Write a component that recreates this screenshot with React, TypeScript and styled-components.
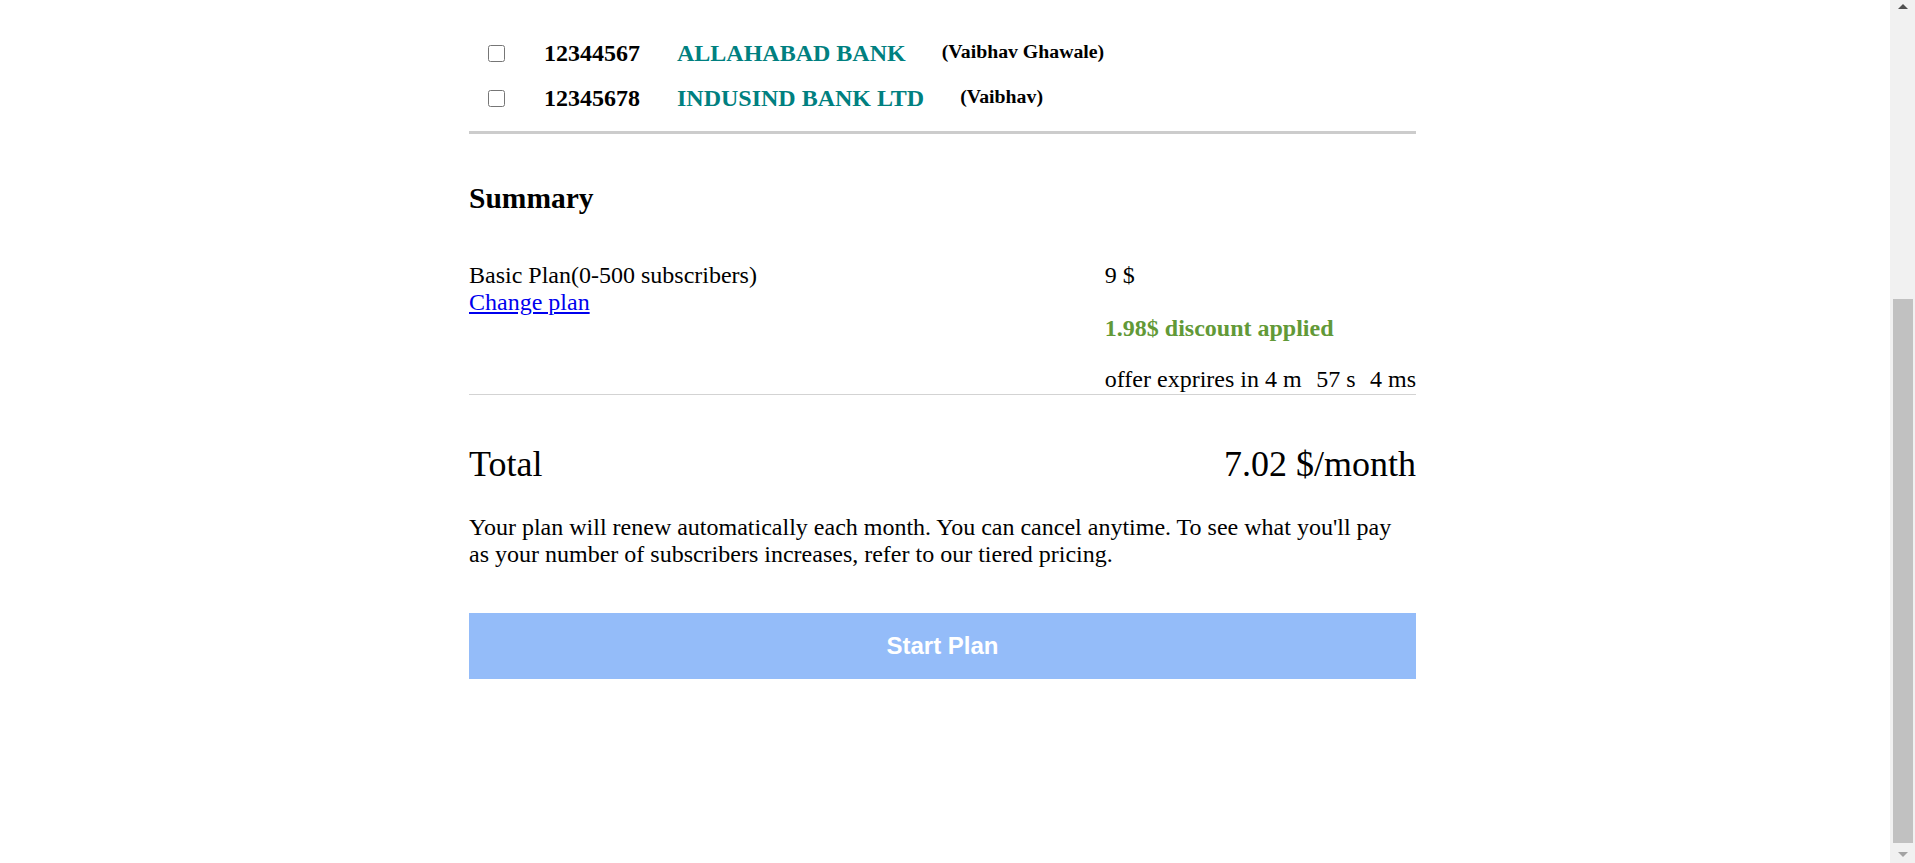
import React from "react";
import styled, { createGlobalStyle } from "styled-components";

const GlobalStyle = createGlobalStyle`
  html, body {
    margin: 0;
    padding: 0;
    overflow: hidden;
    background: #ffffff;
  }
  body {
    font-family: "Liberation Serif", "Times New Roman", serif;
    color: #000000;
  }
`;

const Page = styled.div`
  display: flex;
  width: 1915px;
  height: 863px;
`;

const Main = styled.main`
  flex: 1;
  min-width: 0;
`;

const Content = styled.div`
  width: 947px;
  margin-left: 469px;
`;

const AccountList = styled.div`
  padding-top: 31px;
  padding-bottom: 10px;
  border-bottom: 3px solid #cccccc;
`;

const AccountRow = styled.label`
  display: flex;
  align-items: center;
  height: 45px;
`;

const Check = styled.input.attrs({ type: "checkbox" })`
  flex: none;
  width: 17px;
  height: 17px;
  margin: 0 0 0 19px;
`;

const AccountNo = styled.span`
  margin-left: 39px;
  font-size: 24px;
  font-weight: bold;
`;

const BankName = styled.span`
  margin-left: 37px;
  font-size: 24px;
  font-weight: bold;
  color: #008080;
`;

const Holder = styled.span`
  margin-left: 36px;
  margin-bottom: 5px;
  font-size: 19.8px;
  font-weight: bold;
`;

const SummaryTitle = styled.h3`
  margin: 48px 0 0;
  font-size: 29.5px;
  font-weight: bold;
`;

const PlanRow = styled.div`
  display: flex;
  margin-top: 47px;
  padding-bottom: 1px;
  border-bottom: 1px solid #d3d3d3;
  font-size: 24px;
`;

const PlanInfo = styled.div`
  flex: 1;
`;

const PlanLink = styled.a`
  color: #0000ee;
  text-decoration: underline;
`;

const PriceCol = styled.div`
  flex: none;
  white-space: nowrap;
`;

const Discount = styled.p`
  margin: 26.2px 0 24px;
  font-weight: bold;
  color: #629937;
`;

const TimeUnit = styled.span<{ $first?: boolean }>`
  margin-left: ${(p) => (p.$first ? "0" : "14.5px")};
`;

const TotalRow = styled.div`
  display: flex;
  justify-content: space-between;
  margin-top: 48px;
  font-size: 36px;
`;

const Note = styled.p`
  margin: 28.5px 0 0;
  font-size: 24px;
`;

const StartButton = styled.button`
  display: block;
  width: 100%;
  height: 66px;
  margin-top: 45px;
  padding: 0;
  border: none;
  background: #94bcf9;
  color: #ffffff;
  font-family: "Liberation Sans", Arial, sans-serif;
  font-size: 24px;
  font-weight: bold;
`;

const ScrollBar = styled.div`
  flex: none;
  width: 25px;
  height: 863px;
  background: #f1f1f1;
  display: flex;
  flex-direction: column;
  align-items: center;
`;

const ArrowBtn = styled.div<{ $bottom?: boolean }>`
  width: 100%;
  height: ${(p) => (p.$bottom ? "17px" : "13px")};
  margin-top: ${(p) => (p.$bottom ? "auto" : "0")};
  display: flex;
  align-items: center;
  justify-content: center;
`;

const Thumb = styled.div`
  width: 20px;
  height: 544px;
  margin-top: 286px;
  background: #c1c1c1;
`;

const accounts = [
  { no: "12344567", bank: "ALLAHABAD BANK", holder: "(Vaibhav Ghawale)" },
  { no: "12345678", bank: "INDUSIND BANK LTD", holder: "(Vaibhav)" },
];

export default function App() {
  return (
    <>
      <GlobalStyle />
      <Page>
        <Main>
          <Content>
            <AccountList>
              {accounts.map((a) => (
                <AccountRow key={a.no}>
                  <Check />
                  <AccountNo>{a.no}</AccountNo>
                  <BankName>{a.bank}</BankName>
                  <Holder>{a.holder}</Holder>
                </AccountRow>
              ))}
            </AccountList>

            <SummaryTitle>Summary</SummaryTitle>

            <PlanRow>
              <PlanInfo>
                <div>Basic Plan(0-500 subscribers)</div>
                <PlanLink href="#">Change plan</PlanLink>
              </PlanInfo>
              <PriceCol>
                <div>9 $</div>
                <Discount>1.98$ discount applied</Discount>
                <div>
                  <TimeUnit $first>offer exprires in 4 m</TimeUnit>
                  <TimeUnit>57 s</TimeUnit>
                  <TimeUnit>4 ms</TimeUnit>
                </div>
              </PriceCol>
            </PlanRow>

            <TotalRow>
              <span>Total</span>
              <span>7.02 $/month</span>
            </TotalRow>

            <Note>
              Your plan will renew automatically each month. You can cancel
              anytime. To see what you'll pay as your number of subscribers
              increases, refer to our tiered pricing.
            </Note>

            <StartButton>Start Plan</StartButton>
          </Content>
        </Main>
        <ScrollBar>
          <ArrowBtn>
            <svg width="10" height="5" viewBox="0 0 10 5">
              <polygon points="0,5 5,0 10,5" fill="#505050" />
            </svg>
          </ArrowBtn>
          <Thumb />
          <ArrowBtn $bottom>
            <svg width="10" height="5" viewBox="0 0 10 5">
              <polygon points="0,0 10,0 5,5" fill="#a3a3a3" />
            </svg>
          </ArrowBtn>
        </ScrollBar>
      </Page>
    </>
  );
}
